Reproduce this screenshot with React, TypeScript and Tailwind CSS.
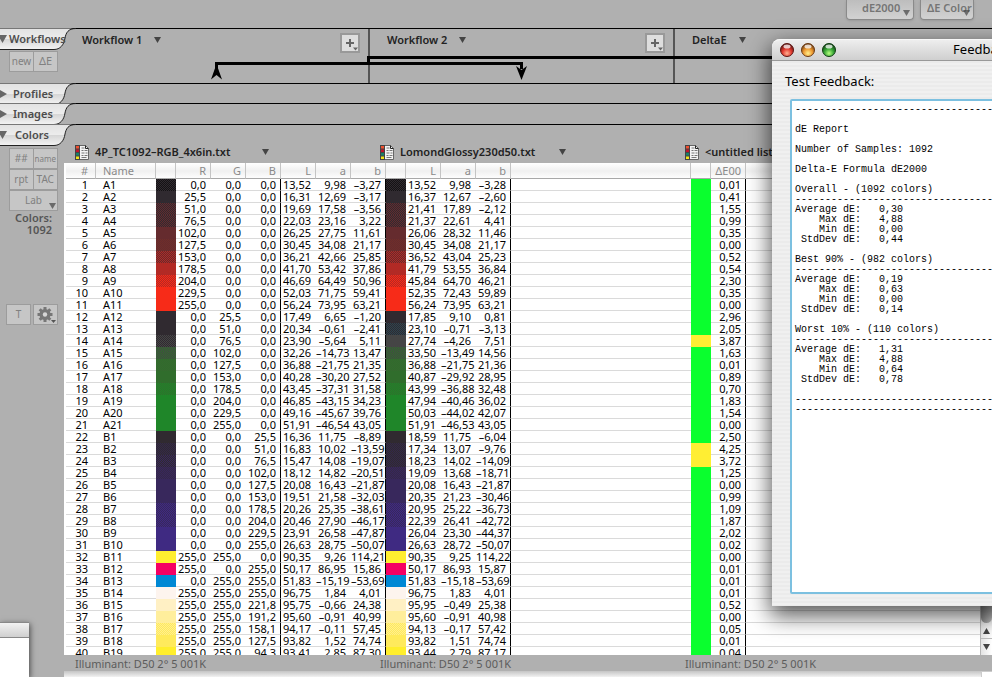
import type { CSSProperties, ReactNode } from "react"
import clsx from "clsx"

// one row: name | R G B | L a b | L a b | dE00
const ROWS = `A1|0,0 0,0 0,0|13,52 9,98 -3,27|13,52 9,98 -3,28|0,01
A2|25,5 0,0 0,0|16,31 12,69 -3,17|16,37 12,67 -2,60|0,41
A3|51,0 0,0 0,0|19,69 17,58 -3,56|21,41 17,89 -2,12|1,55
A4|76,5 0,0 0,0|22,03 23,16 3,22|21,37 22,61 4,41|0,99
A5|102,0 0,0 0,0|26,25 27,75 11,61|26,06 28,32 11,46|0,35
A6|127,5 0,0 0,0|30,45 34,08 21,17|30,45 34,08 21,17|0,00
A7|153,0 0,0 0,0|36,21 42,66 25,85|36,52 43,04 25,23|0,52
A8|178,5 0,0 0,0|41,70 53,42 37,86|41,79 53,55 36,84|0,54
A9|204,0 0,0 0,0|46,69 64,49 50,96|45,84 64,70 46,21|2,30
A10|229,5 0,0 0,0|52,03 71,75 59,41|52,35 72,43 59,89|0,35
A11|255,0 0,0 0,0|56,24 73,95 63,21|56,24 73,95 63,21|0,00
A12|0,0 25,5 0,0|17,49 6,65 -1,20|17,85 9,10 0,81|2,96
A13|0,0 51,0 0,0|20,34 -0,61 -2,41|23,10 -0,71 -3,13|2,05
A14|0,0 76,5 0,0|23,90 -5,64 5,11|27,74 -4,26 7,51|3,87
A15|0,0 102,0 0,0|32,26 -14,73 13,47|33,50 -13,49 14,56|1,63
A16|0,0 127,5 0,0|36,88 -21,75 21,35|36,88 -21,75 21,36|0,01
A17|0,0 153,0 0,0|40,28 -30,20 27,52|40,87 -29,92 28,95|0,89
A18|0,0 178,5 0,0|43,45 -37,31 31,58|43,99 -36,88 32,48|0,70
A19|0,0 204,0 0,0|46,85 -43,15 34,23|47,94 -40,46 36,02|1,83
A20|0,0 229,5 0,0|49,16 -45,67 39,76|50,03 -44,02 42,07|1,54
A21|0,0 255,0 0,0|51,91 -46,54 43,05|51,91 -46,53 43,05|0,00
B1|0,0 0,0 25,5|16,36 11,75 -8,89|18,59 11,75 -6,04|2,50
B2|0,0 0,0 51,0|16,83 10,02 -13,59|17,34 13,07 -9,76|4,25
B3|0,0 0,0 76,5|15,47 14,08 -19,07|18,23 14,02 -14,09|3,72
B4|0,0 0,0 102,0|18,12 14,82 -20,51|19,09 13,68 -18,71|1,25
B5|0,0 0,0 127,5|20,08 16,43 -21,87|20,08 16,43 -21,87|0,00
B6|0,0 0,0 153,0|19,51 21,58 -32,03|20,35 21,23 -30,46|0,99
B7|0,0 0,0 178,5|20,26 25,35 -38,61|20,95 25,22 -36,73|1,09
B8|0,0 0,0 204,0|20,46 27,90 -46,17|22,39 26,41 -42,72|1,87
B9|0,0 0,0 229,5|23,91 26,58 -47,87|26,04 23,30 -44,37|2,02
B10|0,0 0,0 255,0|26,63 28,75 -50,07|26,63 28,72 -50,07|0,02
B11|255,0 255,0 0,0|90,35 9,26 114,21|90,35 9,25 114,22|0,00
B12|255,0 0,0 255,0|50,17 86,95 15,86|50,17 86,93 15,87|0,01
B13|0,0 255,0 255,0|51,83 -15,19 -53,69|51,83 -15,18 -53,69|0,01
B14|255,0 255,0 255,0|96,75 1,84 4,01|96,75 1,83 4,01|0,01
B15|255,0 255,0 221,8|95,75 -0,66 24,38|95,95 -0,49 25,38|0,52
B16|255,0 255,0 191,2|95,60 -0,91 40,99|95,60 -0,91 40,98|0,00
B17|255,0 255,0 158,1|94,17 -0,11 57,45|94,13 -0,17 57,42|0,05
B18|255,0 255,0 127,5|93,82 1,52 74,74|93,82 1,51 74,74|0,01
B19|255,0 255,0 94,3|93,41 2,85 87,30|93,44 2,79 87,17|0,04`
  .split("\n")
  .map((line) => {
    const [name, rgb, lab1, lab2, de] = line.replace(/-/g, "–").split("|")
    return { name, rgb: rgb.split(" "), lab1: lab1.split(" "), lab2: lab2.split(" "), de }
  })

// swatch colours per row, a pair is dithered
const INK = "#302a30"
const MAROON = "#652b2e"
const BRICK = "#b22a25"
const RED = "#f72b18"
const GRAY = "#454545"
const MOSS = "#306d2c"
const GREEN = "#1f8629"
const PLUM = "#38285c"
const VIOLET = "#3f2a82"

const SWATCHES: string[][] = [
  [INK, "#141214"], [INK], [INK, MAROON], [MAROON, INK], [MAROON], [MAROON, "#6f2e2a"],
  [BRICK, MAROON], [BRICK], [RED, BRICK], [RED], [RED], [INK], [INK], [INK, GRAY],
  [GRAY, MOSS], [MOSS, "#36682f"], [MOSS], [MOSS, GREEN], [GREEN], [GREEN], [GREEN],
  [INK], [INK, "#33284a"], [PLUM, INK], [PLUM, "#352848"], [PLUM], [PLUM], [PLUM, VIOLET],
  [VIOLET, PLUM], [VIOLET], [VIOLET], ["#ffee30"], ["#f50063"], ["#0088d4"], ["#fdf4ee"],
  ["#fff0c4"], ["#ffee9c"], ["#ffee90", "#ffea5c"], ["#ffea5c"], ["#ffee2c"],
]

const SWATCHES_2: Record<number, string[]> = {
  12: [INK, "#2c4550"],
  13: [GRAY],
  23: [INK, "#33284a"],
}

const DASHES = "-".repeat(60)

function reportBlock(title: string, avg: string, max: string, min: string, dev: string) {
  return [title, DASHES, `Average dE:   ${avg}`, `    Max dE:   ${max}`, `    Min dE:   ${min}`, ` StdDev dE:   ${dev}`, ""]
}

const REPORT = [
  DASHES, "",
  "dE Report", "",
  "Number of Samples: 1092", "",
  "Delta-E Formula dE2000", "",
  ...reportBlock("Overall - (1092 colors)", "0,30", "4,88", "0,00", "0,44"),
  ...reportBlock("Best 90% - (982 colors)", "0,19", "0,63", "0,00", "0,14"),
  ...reportBlock("Worst 10% - (110 colors)", "1,31", "4,88", "0,64", "0,78"),
  DASHES,
  DASHES,
].join("\n")

function swatchStyle(colors: string[]): CSSProperties {
  const [a, b] = colors
  if (!b) return { backgroundColor: a }
  return { backgroundImage: `repeating-conic-gradient(${a} 0 25%, ${b} 0 50%)`, backgroundSize: "2px 2px" }
}

function Caret({ className }: { className?: string }) {
  return (
    <svg viewBox="0 0 7 6" className={clsx("h-1.5 w-[7px] shrink-0 fill-[#444]", className)} aria-hidden="true">
      <path d="M0 0h7L3.5 6z" />
    </svg>
  )
}

function Tab({ label, open, className }: { label: string; open?: boolean; className?: string }) {
  return (
    <button
      aria-expanded={!!open}
      className="relative flex h-5 w-[76px] items-center text-[11px] font-semibold text-[#4c4c4c]"
    >
      <svg viewBox="0 0 76 22" className="absolute -top-px left-0 h-[22px] w-[76px]" aria-hidden="true">
        <defs>
          <linearGradient id="tabFill" x1="0" y1="0" x2="0" y2="1">
            <stop offset="0" stopColor="#e2e2e2" />
            <stop offset="0.48" stopColor="#ececec" />
            <stop offset="0.52" stopColor="#d6d6d6" />
            <stop offset="1" stopColor="#f4f4f4" />
          </linearGradient>
        </defs>
        <path d="M0 .5H74C68 .5 66 5 65 10C64 17 60 21.500 54 21.500H0z" fill="url(#tabFill)" />
        <path d="M0 .5H70" stroke="#777" />
        <path d="M76 .5C68 .5 66 5 65 10C64 17 60 21.500 54 21.500H0" fill="none" stroke="#222" />
      </svg>
      <svg viewBox="0 0 7 8" className="relative h-2 w-[7px] shrink-0 fill-[#666]" aria-hidden="true">
        <path d={open ? "M-2 0H7L2.500 8z" : "M0 0L7 4L0 8z"} />
      </svg>
      <span className={clsx("relative", className)}>{label}</span>
    </button>
  )
}

function ToolButton({ children, className }: { children: ReactNode; className?: string }) {
  return (
    <button
      className={clsx(
        "relative flex h-[21px] items-center justify-center border border-[#9c9c9c] bg-[#c6c6c6] text-[#808080]",
        className
      )}
    >
      {children}
    </button>
  )
}

function WorkflowHeader({ title, add }: { title: string; add?: boolean }) {
  return (
    <div className="flex h-[54px] items-start justify-between pt-[3px] pr-2">
      <button className="flex h-4 items-center gap-3 text-[11px] font-semibold text-[#222]">
        {title}
        <Caret />
      </button>
      {add && (
        <button
          aria-label={`Add to ${title}`}
          className="relative mt-px flex size-5 items-center justify-center border-2 border-[#999] bg-[#dedede]"
        >
          <svg viewBox="0 0 18 18" className="size-[18px] shrink-0" aria-hidden="true">
            <path d="M9 5v8M5 9h8" stroke="#666" strokeWidth="2" />
            <path d="M12 13.500h5l-2.500 3z" fill="#666" />
          </svg>
        </button>
      )}
    </div>
  )
}

function DocIcon() {
  return (
    <svg viewBox="0 0 14 15" className="h-[15px] w-3.5 shrink-0" aria-hidden="true">
      <path d="M.5 .5H10.500L13.500 3.500V14.500H.5z" fill="#f4f4f4" stroke="#666" />
      <path d="M10.500 .5V3.500H13.500" fill="none" stroke="#222" />
      <path d="M0 0H5V15H0z" fill="#444" />
      <path d="M1 1h3v2.500H1z" fill="#f0502f" />
      <path d="M1 4.500h3V7H1z" fill="#c4122a" />
      <path d="M1 8h3v2.500H1z" fill="#18826a" />
      <path d="M1 11.500h3V14H1z" fill="#f2e418" />
      <path d="M6.500 3h3M6.500 5.500h2m1 0h3M6.500 8h3m1 0h2M6.500 10.500h2m1 0h3M6.500 12.500h5" stroke="#777" />
    </svg>
  )
}

function FileHeader({ name, gap }: { name: string; gap: string }) {
  return (
    <div className={clsx("flex items-center text-[11px] font-semibold whitespace-nowrap text-[#222]", gap)}>
      <span className="flex items-center gap-1.5">
        <DocIcon />
        {name}
      </span>
      <button aria-label={`${name} menu`}>
        <Caret />
      </button>
    </div>
  )
}

function Num({ children, line }: { children: ReactNode; line?: boolean }) {
  return (
    <td className={clsx("border-b border-b-[#dadada] py-0 pl-0 text-right", line ? "border-r border-r-black pr-1" : "pr-[5px]")}>
      {children}
    </td>
  )
}

function Swatch({ colors }: { colors: string[] }) {
  return <td className="p-0" style={swatchStyle(colors)} />
}

const HEADS = ["#", "Name", "", "R", "G", "B", "L", "a", "b", "", "L", "a", "b", "", "", "ΔE00", ""]

function ColorTable() {
  return (
    <table className="w-full table-fixed border-separate border-spacing-0 text-[11px] leading-[11px] whitespace-nowrap text-black">
      <colgroup>
        <col className="w-[30px]" />
        <col className="w-[60px]" />
        <col className="w-5" />
        <col span={6} className="w-[35px]" />
        <col className="w-5" />
        <col span={3} className="w-[35px]" />
        <col className="w-[180px]" />
        <col className="w-5" />
        <col className="w-[35px]" />
        <col />
      </colgroup>
      <thead>
        <tr className="h-4 bg-linear-to-b from-white via-[#f0f0f0] to-white text-[#8a8a8a]">
          {HEADS.map((head, i) => (
            <th
              key={i}
              className={clsx(
                "border-b border-b-[#a8a8a8] p-0 font-normal",
                i < 16 && "border-r border-r-[#c4c4c4]",
                i === 1 ? "pl-[7px] text-left" : i === 0 ? "pr-[7px] text-right" : "pr-1 text-right"
              )}
            >
              {head}
            </th>
          ))}
        </tr>
      </thead>
      <tbody>
        {ROWS.map((row, i) => (
          <tr key={row.name} className="h-3">
            <td className="border-b border-[#dadada] p-0 pr-2 text-right">{i + 1}</td>
            <td className="border-b border-[#dadada] p-0 pl-[7px]">{row.name}</td>
            <Swatch colors={SWATCHES[i]} />
            {row.rgb.map((v, n) => (
              <Num key={n} line={n === 2}>{v}</Num>
            ))}
            {row.lab1.map((v, n) => (
              <Num key={n} line={n === 2}>{v}</Num>
            ))}
            <Swatch colors={SWATCHES_2[i] ?? SWATCHES[i]} />
            {row.lab2.map((v, n) => (
              <Num key={n} line={n === 2}>{v}</Num>
            ))}
            <td className="border-b border-[#dadada] p-0" />
            <Swatch colors={[parseFloat(row.de.replace(",", ".")) > 3 ? "#ffee33" : "#0aff2e"]} />
            <Num line>{row.de}</Num>
            <td className="border-b border-[#dadada] p-0" />
          </tr>
        ))}
      </tbody>
    </table>
  )
}

function Light({ id, edge, core, glow, label }: { id: string; edge: string; core: string; glow: string; label: string }) {
  return (
    <button aria-label={label} className="size-3.5">
      <svg viewBox="0 0 14 14" className="size-3.5" aria-hidden="true">
        <defs>
          <radialGradient id={id} cx="0.5" cy="0.75" r="0.7">
            <stop offset="0" stopColor={glow} />
            <stop offset="0.5" stopColor={core} />
            <stop offset="1" stopColor={edge} />
          </radialGradient>
        </defs>
        <circle cx="7" cy="7" r="6.500" fill={`url(#${id})`} stroke={edge} />
        <ellipse cx="7" cy="3.500" rx="3.500" ry="2" fill="#fff" opacity="0.75" />
      </svg>
    </button>
  )
}

function FeedbackWindow() {
  return (
    <div
      role="dialog"
      aria-label="Feedback"
      className="absolute top-[39px] left-[772px] w-[420px] rounded-t-lg bg-[#ededed] bg-[repeating-linear-gradient(to_bottom,#f0f0f0_0_2px,#ebebeb_2px_4px)] shadow-[0_8px_22px_2px_rgba(0,0,0,0.65)]"
    >
      <div className="relative flex h-[22px] items-center gap-[7px] rounded-t-lg border-t border-b border-t-[#f8f8f8] border-b-[#999] bg-linear-to-b from-[#eee] to-[#cfcfcf] pl-2">
        <Light id="close" edge="#5c1512" core="#e23a30" glow="#ffb090" label="Close" />
        <Light id="minimize" edge="#6b3a12" core="#ee9a32" glow="#fff08c" label="Minimize" />
        <Light id="zoom" edge="#0e3d12" core="#3aa838" glow="#b8ff80" label="Zoom" />
        <h2 className="pointer-events-none absolute inset-x-0 text-center text-[13px] text-black">Feedback</h2>
      </div>
      <div className="flex flex-col px-[18px] pt-3 pb-3 text-[13px] text-black">
        <label htmlFor="feedback" className="-ml-[5px] h-[26px] leading-4">
          Test Feedback:
        </label>
        <textarea
          id="feedback"
          readOnly
          wrap="off"
          defaultValue={REPORT}
          className="h-[495px] resize-none overflow-hidden rounded-xs border-2 border-[#7cc0e0] bg-white px-[3px] py-1 font-['Liberation_Mono',monospace] text-[10px] leading-[10px] outline-none"
        />
      </div>
    </div>
  )
}

export default function App() {
  return (
    <div className="relative flex h-screen flex-col overflow-hidden bg-[#b0b0b0] font-['Noto_Sans','Open_Sans',sans-serif]">
      <div className="flex h-7 shrink-0 items-start justify-end gap-1.5 pr-[18px] text-[11px] font-semibold">
        <div className="relative flex">
          <select
            aria-label="Delta E formula"
            className="h-5 w-[68px] appearance-none rounded-b-[4px] border border-t-0 border-[#8a8a8a] bg-linear-to-b from-[#bdbdbd] to-[#d2d2d2] pr-0 pb-0.5 pl-[15px] text-[#757575] shadow-sm"
          >
            <option>dE2000</option>
          </select>
          <Caret className="absolute right-1 bottom-1 opacity-70" />
        </div>
        <div className="relative flex">
          <select
            aria-label="Delta E display"
            className="h-5 w-[54px] appearance-none rounded-b-[4px] border border-t-0 border-[#8a8a8a] bg-linear-to-b from-[#bdbdbd] to-[#d2d2d2] pb-0.5 pl-1.5 text-[#757575] shadow-sm"
          >
            <option>ΔE Color</option>
          </select>
          <Caret className="absolute right-1 bottom-1 opacity-70" />
        </div>
      </div>

      <section className="relative flex h-[55px] shrink-0 border-t border-black">
        <div className="w-16 shrink-0">
          <Tab label="Workflows" open className="ml-0.5" />
          <div className="mt-0.5 ml-[9px] flex w-[49px] text-[10px]">
            <ToolButton className="w-[25px]">new</ToolButton>
            <ToolButton className="-ml-px w-[25px] text-[11px]">ΔE</ToolButton>
          </div>
        </div>
        <div className="w-[306px] shrink-0 border-r-2 border-[#555] pl-[18px]">
          <WorkflowHeader title="Workflow 1" add />
        </div>
        <div className="w-[305px] shrink-0 border-r-2 border-[#555] pl-[17px]">
          <WorkflowHeader title="Workflow 2" add />
        </div>
        <div className="flex-1 pl-[17px]">
          <WorkflowHeader title="DeltaE" />
        </div>
        {/* links between the workflow columns */}
        <svg viewBox="0 0 992 54" className="pointer-events-none absolute top-0 left-0 h-[54px] w-[992px]" aria-hidden="true">
          <path d="M216.500 44V34.500H521.500V40" fill="none" stroke="#000" strokeWidth="3" />
          <path d="M368.500 35V28.500H992" fill="none" stroke="#000" strokeWidth="3" />
          <path d="M216.500 35L222 50.500L216.500 46L211 50.500z" />
          <path d="M521.500 51L516 37L521.500 41L527 37z" />
        </svg>
      </section>

      <section className="h-5 shrink-0 border-t border-black">
        <Tab label="Profiles" className="ml-1.5" />
      </section>

      <section className="h-[21px] shrink-0 border-t border-black">
        <Tab label="Images" className="ml-1.5" />
      </section>

      <section className="flex min-h-0 flex-1 border-t border-black">
        <div className="w-16 shrink-0 text-[#808080]">
          <Tab label="Colors" open className="ml-2" />
          <div className="mt-[3px] ml-[9px] grid w-[49px] grid-cols-2 text-[10px]">
            <ToolButton>##</ToolButton>
            <ToolButton className="-ml-px text-[8px]">name</ToolButton>
            <ToolButton>rpt</ToolButton>
            <ToolButton className="-ml-px">TAC</ToolButton>
            <div className="relative col-span-2">
              <select
                aria-label="Color space"
                className="h-[21px] w-full appearance-none border border-[#9c9c9c] bg-[#c6c6c6] pl-[15px] text-[10px]"
              >
                <option>Lab</option>
              </select>
              <Caret className="absolute right-0.5 bottom-0.5 opacity-70" />
            </div>
          </div>
          <p className="mt-px pr-3 text-right text-[11px] leading-3 font-semibold text-[#555]">
            Colors:
            <br />
            1092
          </p>
          <div className="mt-[68px] ml-1.5 flex gap-0.5 text-[10px]">
            <ToolButton className="w-[25px]">T</ToolButton>
            <ToolButton className="w-[25px]">
              <svg viewBox="0 0 23 19" className="h-[19px] w-[23px]" aria-label="Settings">
                <g stroke="#777" strokeWidth="3">
                  <path d="M11 2v15M3.500 9.500h15M5.700 4.200l10.600 10.600M16.300 4.200L5.700 14.800" />
                </g>
                <circle cx="11" cy="9.500" r="5.500" fill="#777" />
                <circle cx="11" cy="9.500" r="2.200" fill="#d6d6d6" />
                <path d="M17 15h5l-2.500 3z" fill="#555" />
              </svg>
            </ToolButton>
          </div>
        </div>

        <div className="flex min-w-0 flex-1 flex-col">
          <div className="grid h-[38px] shrink-0 grid-cols-[305px_305px_1fr] pt-4 pl-[11px]">
            <FileHeader name="4P_TC1092–RGB_4x6in.txt" gap="gap-8" />
            <FileHeader name="LomondGlossy230d50.txt" gap="gap-6" />
            <FileHeader name="<untitled list>" gap="gap-6" />
          </div>

          <div className="flex min-h-0 flex-1 bg-white">
            <div className="min-w-0 flex-1 overflow-hidden pl-0.5">
              <ColorTable />
            </div>
            <div className="flex w-3 shrink-0 flex-col items-center justify-end border-l border-[#b5b5b5] bg-linear-to-r from-[#e4e4e4] to-white">
              <div className="w-full flex-1 rounded-b-full bg-linear-to-r from-[#8a8a8a] to-[#c8c8c8]" />
              <button aria-label="Scroll up" className="flex h-4 w-full items-center justify-center border-b border-[#bbb]">
                <Caret className="rotate-180" />
              </button>
              <button aria-label="Scroll down" className="flex h-4 w-full items-center justify-center">
                <Caret />
              </button>
            </div>
          </div>

          <div className="grid h-4 shrink-0 grid-cols-[305px_305px_1fr] items-center pl-[11px] text-[11px] leading-[18px] text-[#5c5c5c]">
            <span>Illuminant: D50 2° 5 001K</span>
            <span>Illuminant: D50 2° 5 001K</span>
            <span>Illuminant: D50 2° 5 001K</span>
          </div>
          <div className="flex h-1.5 shrink-0">
            <div className="flex-1 bg-linear-to-b from-[#c4c4c4] to-[#f2f2f2]" />
            <div className="w-[11px] border-t border-l border-[#ccc] bg-white" />
          </div>
        </div>
      </section>

      {/* corner of a window lying under the main one */}
      <div className="absolute bottom-0 left-0 h-[55px] w-[29px] bg-white shadow-[1px_2px_6px_rgba(0,0,0,0.6)]">
        <div className="h-4 border-t border-b border-t-[#888] border-b-[#888] bg-linear-to-b from-[#f2f2f2] to-[#cfcfcf]" />
      </div>

      <FeedbackWindow />
    </div>
  )
}
